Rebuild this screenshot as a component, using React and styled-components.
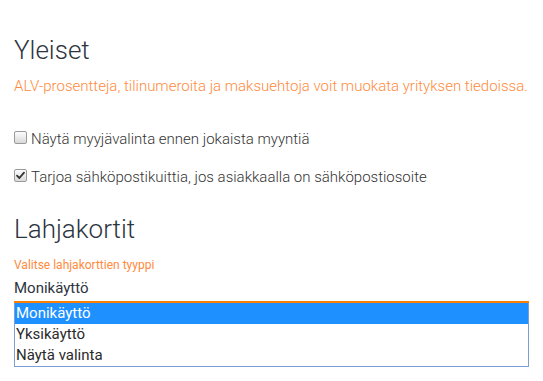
import React from "react";
import styled, { createGlobalStyle } from "styled-components";

const Global = createGlobalStyle`
  html, body { margin: 0; padding: 0; background: #fff; }
  body { font-family: Roboto, "Noto Sans", sans-serif; color: #333; }
`;

const Page = styled.div`
  padding: 35px 14px 0 14px;
  width: 515px;
`;

const Section = styled.section`
  display: flex;
  flex-direction: column;
`;

const Heading = styled.h2`
  margin: ${(p) => p.$top || 0}px 0 0 0;
  font-size: 26px;
  line-height: 30px;
  font-weight: 300;
  color: #2c3440;
`;

const Note = styled.p`
  margin: 11px 0 0 0;
  font-size: 15px;
  line-height: 20px;
  font-weight: 300;
  color: #ff8a3d;
  white-space: nowrap;
`;

const CheckRow = styled.label`
  display: flex;
  align-items: center;
  gap: 4px;
  margin-top: ${(p) => p.$top}px;
  font-size: 15px;
  line-height: 20px;
  font-weight: 300;
  color: #333;
  white-space: nowrap;
`;

const Box = styled.span`
  width: 11px;
  height: 11px;
  border: 1px solid #9a9a9a;
  border-radius: 2px;
  background: linear-gradient(#fcfcfc, #dadada);
  display: flex;
  align-items: center;
  justify-content: center;
  margin-top: -3px;
  flex: none;
`;

const Check = () => (
  <svg width="9" height="9" viewBox="0 0 9 9">
    <path d="M1 4.6 L3.4 7 L8 1.6" fill="none" stroke="#333" strokeWidth="1.8" strokeLinecap="round" strokeLinejoin="round" />
  </svg>
);

const FieldLabel = styled.div`
  margin-top: 13px;
  font-size: 12px;
  line-height: 17px;
  color: #ff8a3d;
`;

const SelectValue = styled.div`
  margin-top: 3px;
  font-size: 15px;
  line-height: 22px;
  color: #2c3440;
  border-bottom: 2px solid #ff7f00;
  padding-bottom: 2px;
`;

const Listbox = styled.ul`
  list-style: none;
  margin: 0;
  padding: 0;
  border: 1px solid #7e9ed6;
  border-top: none;
  display: flex;
  flex-direction: column;
`;

const Option = styled.li`
  height: 21px;
  line-height: 21px;
  padding-left: 1px;
  font-size: 15px;
  color: ${(p) => (p.$selected ? "#fff" : "#2a2a2a")};
  background: ${(p) => (p.$selected ? "#1e90ff" : "#fff")};
`;

export default function App() {
  return (
    <>
      <Global />
      <Page>
        <Section>
          <Heading>Yleiset</Heading>
          <Note>ALV-prosentteja, tilinumeroita ja maksuehtoja voit muokata yrityksen tiedoissa.</Note>
          <CheckRow $top={33}>
            <Box />
            <span>Näytä myyjävalinta ennen jokaista myyntiä</span>
          </CheckRow>
          <CheckRow $top={18}>
            <Box>
              <Check />
            </Box>
            <span>Tarjoa sähköpostikuittia, jos asiakkaalla on sähköpostiosoite</span>
          </CheckRow>
        </Section>
        <Section>
          <Heading $top={27}>Lahjakortit</Heading>
          <FieldLabel>Valitse lahjakorttien tyyppi</FieldLabel>
          <SelectValue>Monikäyttö</SelectValue>
          <Listbox>
            <Option $selected>Monikäyttö</Option>
            <Option>Yksikäyttö</Option>
            <Option>Näytä valinta</Option>
          </Listbox>
        </Section>
      </Page>
    </>
  );
}
